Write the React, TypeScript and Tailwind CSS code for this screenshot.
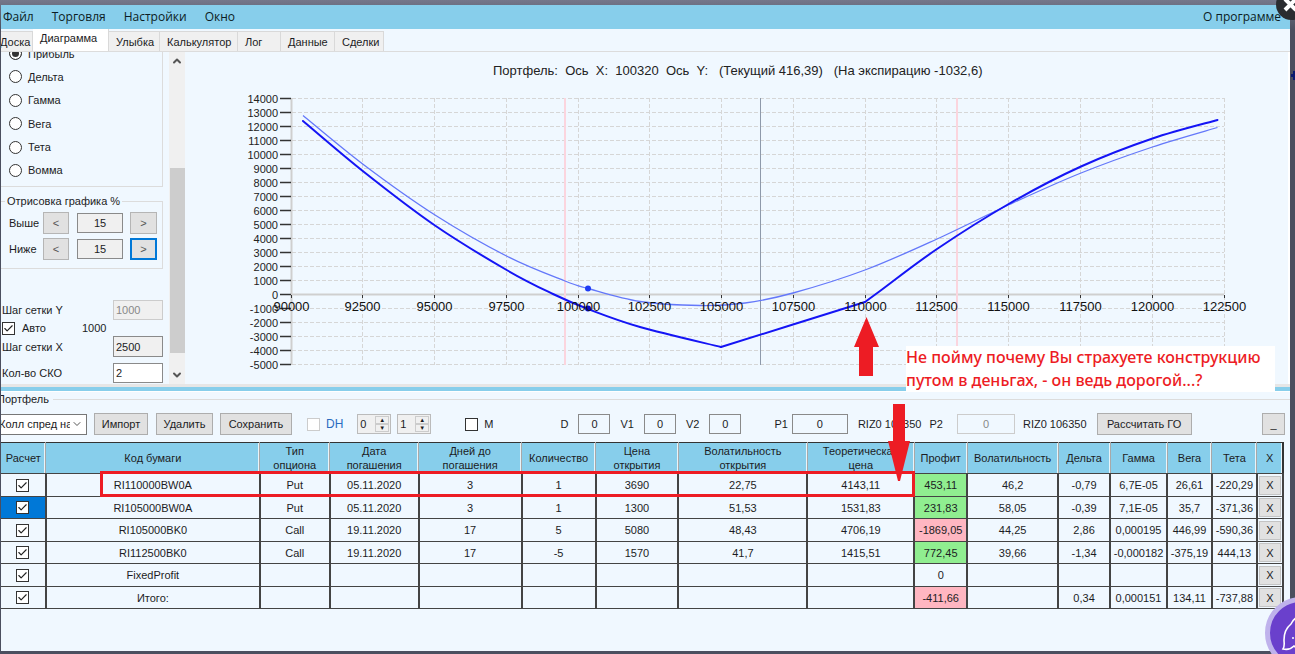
import React from 'react'
import { Check, ChevronDown, ChevronUp } from 'lucide-react'

type Point = [number, number]

type Row = {
  code: string
  cells: string[]
  profit?: 'up' | 'down'
  selected?: boolean
}

const menu = ['Файл', 'Торговля', 'Настройки', 'Окно']

const tabs = [
  { label: 'Доска', width: 'w-[40px]' },
  { label: 'Диаграмма', width: 'w-[76px]', active: true },
  { label: 'Улыбка', width: 'w-[51px]' },
  { label: 'Калькулятор', width: 'w-[78px]' },
  { label: 'Лог', width: 'w-[43px]' },
  { label: 'Данные', width: 'w-[54px]' },
  { label: 'Сделки', width: 'w-[49px]' }
]

const modes = ['Прибыль', 'Дельта', 'Гамма', 'Вега', 'Тета', 'Вомма']

const columns = [
  { title: 'Расчет', width: 45 },
  { title: 'Код бумаги', width: 214 },
  { title: 'Тип\nопциона', width: 70 },
  { title: 'Дата\nпогашения', width: 89 },
  { title: 'Дней до\nпогашения', width: 103 },
  { title: 'Количество', width: 74 },
  { title: 'Цена\nоткрытия', width: 83 },
  { title: 'Волатильность\nоткрытия', width: 129 },
  { title: 'Теоретическая\nцена', width: 107 },
  { title: 'Профит', width: 53 },
  { title: 'Волатильность', width: 91 },
  { title: 'Дельта', width: 52 },
  { title: 'Гамма', width: 57 },
  { title: 'Вега', width: 45 },
  { title: 'Тета', width: 45 },
  { title: 'X', width: 26 }
]

const rows: Row[] = [
  {
    code: 'RI110000BW0A',
    cells: ['Put', '05.11.2020', '3', '1', '3690', '22,75', '4143,11', '453,11', '46,2', '-0,79', '6,7E-05', '26,61', '-220,29'],
    profit: 'up'
  },
  {
    code: 'RI105000BW0A',
    cells: ['Put', '05.11.2020', '3', '1', '1300', '51,53', '1531,83', '231,83', '58,05', '-0,39', '7,1E-05', '35,7', '-371,36'],
    profit: 'up',
    selected: true
  },
  {
    code: 'RI105000BK0',
    cells: ['Call', '19.11.2020', '17', '5', '5080', '48,43', '4706,19', '-1869,05', '44,25', '2,86', '0,000195', '446,99', '-590,36'],
    profit: 'down'
  },
  {
    code: 'RI112500BK0',
    cells: ['Call', '19.11.2020', '17', '-5', '1570', '41,7', '1415,51', '772,45', '39,66', '-1,34', '-0,000182', '-375,19', '444,13'],
    profit: 'up'
  },
  { code: 'FixedProfit', cells: ['', '', '', '', '', '', '', '0', '', '', '', '', ''] },
  {
    code: 'Итого:',
    cells: ['', '', '', '', '', '', '', '-411,66', '', '0,34', '0,000151', '134,11', '-737,88'],
    profit: 'down'
  }
]

const current: Point[] = [
  [303, 115.5], [364, 165], [435, 215], [507.5, 256.5], [565, 281], [588, 288.5], [640, 301.5], [700, 305.5], [745, 303],
  [793, 293], [865, 270], [937, 239], [1009.5, 204.5], [1081, 173], [1152.5, 147], [1217.5, 127.5]
]

// the expiration line has corners at the strikes, so it is kept in three parts
const expiration: Point[][] = [
  [[303, 121], [364, 172], [435, 225.5], [507.5, 270.5], [553, 294], [588, 309], [640, 327], [721, 347]],
  [[721, 347], [865, 302]],
  [[865, 302], [880, 291], [937, 249], [1009.5, 203.5], [1081, 166.5], [1152.5, 138.5], [1217.5, 120]]
]

function smooth(points: Point[]) {
  let d = `M${points[0][0]} ${points[0][1]}`
  for (let i = 0; i < points.length - 1; i++) {
    const p0 = points[i - 1] ?? points[i]
    const p1 = points[i]
    const p2 = points[i + 1]
    const p3 = points[i + 2] ?? p2
    d += ` C${p1[0] + (p2[0] - p0[0]) / 6} ${p1[1] + (p2[1] - p0[1]) / 6}`
    d += ` ${p2[0] - (p3[0] - p1[0]) / 6} ${p2[1] - (p3[1] - p1[1]) / 6} ${p2[0]} ${p2[1]}`
  }
  return d
}

const px = (value: number) => Math.floor(291 + ((value - 90000) * 933) / 32500) + 0.5
const py = (value: number) => Math.round(294 - value * 0.014) + 0.5

function Chart() {
  const ys = Array.from({ length: 20 }, (_, i) => -5000 + i * 1000)
  const xs = Array.from({ length: 14 }, (_, i) => 90000 + i * 2500)

  return (
    <svg viewBox="185 52 1103 332" className="block w-full" role="img" aria-label="Портфель">
      <text x="493" y="75" fontSize="13" fill="#222" xmlSpace="preserve">
        Портфель:  Ось  X:  100320  Ось  Y:   (Текущий 416,39)   (На экспирацию -1032,6)
      </text>
      {/* Grid */}
      <g stroke="#d6d6d6" strokeDasharray="4 2">
        {ys.map(y => <line key={y} x1="292" x2="1224" y1={py(y)} y2={py(y)} />)}
        {xs.slice(1).map(x => <line key={x} x1={px(x)} x2={px(x)} y1="98" y2="365" />)}
      </g>
      <path d="M291.5 98V365M291 294.5H1224" stroke="#cfcfcf" strokeWidth="2" />
      <path d="M565 98V365M957 98V365" stroke="#fbd5de" strokeWidth="2" />
      <path d="M760.5 98V365" stroke="#8e99aa" />

      {/* Curves */}
      <path d={smooth(current)} fill="none" stroke="#6478fa" strokeWidth="1.3" />
      {expiration.map((part, i) => (
        <path key={i} d={smooth(part)} fill="none" stroke="#1414f5" strokeWidth="2" strokeLinejoin="round" strokeLinecap="round" />
      ))}
      <circle cx="588" cy="288.5" r="3" fill="#1e3cf5" />
      <circle cx="588" cy="308.5" r="3" fill="#0a0ac8" />

      {/* Axis labels */}
      {ys.map(y => (
        <g key={y}>
          <line x1="280" x2="291" y1={py(y)} y2={py(y)} stroke="#333" strokeWidth="1.5" />
          <text x="278" y={py(y) + 4} fontSize="11" textAnchor="end" fill="#222">{y}</text>
        </g>
      ))}
      {xs.map(x => (
        <g key={x}>
          <line x1={px(x)} x2={px(x)} y1="295" y2="298" stroke="#333" />
          <text x={px(x)} y="311" fontSize="13" textAnchor="middle" fill="#111">{x}</text>
        </g>
      ))}
    </svg>
  )
}

function Tick({ label, checked = false, pale = false }: { label: string; checked?: boolean; pale?: boolean }) {
  return (
    <span className="inline-grid size-[13px] place-items-center align-middle">
      <input
        type="checkbox"
        aria-label={label}
        defaultChecked={checked}
        className={`col-start-1 row-start-1 size-[13px] appearance-none border bg-white ${pale ? 'border-[#ccc]' : 'border-[#333]'}`}
      />
      {checked && <Check className="pointer-events-none col-start-1 row-start-1 size-[11px] text-[#222]" strokeWidth={2.5} />}
    </span>
  )
}

function Percent({ label, focused = false }: { label: string; focused?: boolean }) {
  return (
    <div className="flex h-[22px] items-center">
      <label htmlFor={label} className="w-[34px]">{label}</label>
      <button className="h-[22px] w-[26px] border border-[#b5b5b5] bg-[#e1e1e1] text-[#555]">&lt;</button>
      <input id={label} defaultValue="15" className="ml-2 h-[20px] w-[46px] border border-[#8a8a8a] bg-[#f0f0f0] text-center" />
      <button
        className={`ml-[7px] h-[22px] w-[27px] bg-[#e1e1e1] text-[#555] ${focused ? 'border-2 border-[#0078d7]' : 'border border-[#b5b5b5]'}`}
      >
        &gt;
      </button>
    </div>
  )
}

function Sidebar() {
  return (
    <div className="flex w-[184px] shrink-0 overflow-hidden">
      <div className="flex-1 pr-[6px]">
        <div className="-mt-[6px] flex h-[141px] flex-col justify-between border-r border-b border-[#dcdcdc] pb-2 pl-2">
          {modes.map((mode, i) => (
            <label key={mode} className="flex h-[15px] items-center gap-[6px]">
              <input
                type="radio"
                name="mode"
                defaultChecked={i === 0}
                className="size-[13px] appearance-none rounded-full border border-[#333] bg-white checked:border-[#333] checked:bg-[#333] checked:shadow-[inset_0_0_0_2px_white]"
              />
              {mode}
            </label>
          ))}
        </div>

        <fieldset className="mt-[7px] h-[75px] border border-l-0 border-[#dcdcdc] pl-2">
          <legend className="-ml-1 px-[2px] leading-[14px]">Отрисовка графика %</legend>
          <div className="flex flex-col gap-1 pt-1">
            <Percent label="Выше" />
            <Percent label="Ниже" focused />
          </div>
        </fieldset>

        <div className="mt-[31px] flex flex-col pl-[1px]">
          <div className="flex h-[20px] items-center justify-between">
            <label htmlFor="stepY">Шаг сетки Y</label>
            <input id="stepY" disabled defaultValue="1000" className="h-[20px] w-[50px] border border-[#ccc] bg-[#f0f0f0] pl-[2px] text-[#888]" />
          </div>
          <div className="flex h-[16px] items-center">
            <Tick label="Авто" checked />
            <span className="ml-[7px] w-[60px]">Авто</span>
            <span>1000</span>
          </div>
          <div className="flex h-[21px] items-center justify-between">
            <label htmlFor="stepX">Шаг сетки X</label>
            <input id="stepX" defaultValue="2500" className="h-[21px] w-[50px] border border-[#8a8a8a] bg-[#f0f0f0] pl-[2px]" />
          </div>
          <div className="mt-[6px] flex h-[20px] items-center justify-between">
            <label htmlFor="sko">Кол-во СКО</label>
            <input id="sko" defaultValue="2" className="h-[20px] w-[50px] border border-[#8a8a8a] bg-white pl-[2px]" />
          </div>
        </div>
      </div>

      {/* Scrollbar */}
      <div className="flex w-[16px] flex-col items-center justify-between bg-[#f0f0f0] py-[3px]">
        <ChevronUp className="size-3 text-[#555]" strokeWidth={4} />
        <div className="mt-[101px] w-[15px] flex-1 bg-[#cdcdcd]" />
        <ChevronDown className="mt-4 size-3 text-[#555]" strokeWidth={4} />
      </div>
    </div>
  )
}

function Spinner({ label, value }: { label: string; value: string }) {
  return (
    <span className="flex h-[20px] w-[34px] border border-[#bbb] bg-[#f0f0f0] p-px">
      <input aria-label={label} defaultValue={value} className="w-[16px] pl-px" />
      <span className="flex w-[14px] flex-col">
        <button aria-label={`${label} +`} className="flex h-2 items-center justify-center border border-[#ccc] text-[6px]">▲</button>
        <button aria-label={`${label} -`} className="flex h-2 items-center justify-center border border-[#ccc] text-[6px]">▼</button>
      </span>
    </span>
  )
}

function Field({ label, width, muted = false }: { label: string; width: string; muted?: boolean }) {
  return (
    <>
      <label htmlFor={label}>{label}</label>
      <input
        id={label}
        defaultValue="0"
        className={`h-[20px] border text-center ${width} ${muted ? 'border-[#ccc] text-[#888]' : 'border-[#8a8a8a]'}`}
      />
    </>
  )
}

function Toolbar() {
  const button = 'h-[22px] border border-[#adadad] bg-[#e1e1e1]'

  return (
    <div className="flex h-[22px] items-center pr-[5px] whitespace-nowrap">
      <div className="-ml-1 inline-grid w-[90px] items-center">
        <select aria-label="Стратегия" className="col-start-1 row-start-1 h-[21px] w-full appearance-none border border-[#777] bg-white pr-4 pl-px">
          <option>Колл спред на</option>
        </select>
        <ChevronDown className="pointer-events-none col-start-1 row-start-1 mr-1 size-3 justify-self-end text-[#555]" />
      </div>
      <button className={`ml-[7px] w-[54px] ${button}`}>Импорт</button>
      <button className={`ml-2 w-[57px] ${button}`}>Удалить</button>
      <button className={`ml-[7px] w-[72px] ${button}`}>Сохранить</button>
      <div className="ml-[15px] flex items-center gap-[6px] text-[12px] text-[#2a6cbf]">
        <Tick label="DH" pale />
        DH
      </div>
      <div className="ml-[14px] flex gap-[6px]">
        <Spinner label="Hedge" value="0" />
        <Spinner label="Step" value="1" />
      </div>
      <div className="ml-[34px] flex items-center gap-[6px]">
        <Tick label="M" />
        M
      </div>
      <div className="ml-[67px] flex items-center gap-[10px]">
        <Field label="D" width="w-[32px]" />
        <Field label="V1" width="w-[32px]" />
        <Field label="V2" width="w-[32px]" />
      </div>
      <div className="ml-[33px] flex items-center gap-[4px]">
        <Field label="P1" width="w-[56px]" />
      </div>
      <span className="ml-[10px]">RIZ0 106350</span>
      <div className="ml-2 flex items-center gap-[14px]">
        <Field label="P2" width="w-[58px]" muted />
      </div>
      <span className="ml-2">RIZ0 106350</span>
      <button className={`ml-[10px] w-[95px] ${button}`}>Рассчитать ГО</button>
      <button className={`ml-auto w-[23px] ${button}`}>_</button>
    </div>
  )
}

function Positions() {
  return (
    <table className="w-full table-fixed border-collapse border-y border-r-2 border-[#333] text-center">
      <colgroup>
        {columns.map((c, i) => <col key={i} style={{ width: `${(c.width / 1283) * 100}%` }} />)}
      </colgroup>
      <thead>
        <tr className="h-[31px] bg-[#87ceeb] leading-[14px]">
          {columns.map((c, i) => (
            <th key={i} className="border-r border-[#a8a8a8] p-0 font-normal whitespace-pre-line shadow-[inset_-1px_0_0_#e8f4fa]">
              {c.title}
            </th>
          ))}
        </tr>
      </thead>
      <tbody>
        {rows.map(row => (
          <tr key={row.code} className="odd:h-[23px] even:h-[22px]">
            <td className={`border-x-2 border-y border-l-0 border-[#444] p-0 leading-none ${row.selected ? 'bg-[#0078d7]' : ''}`}>
              <Tick label={row.code} checked />
            </td>
            <td className="border-x-2 border-y border-[#444] p-0">{row.code}</td>
            {row.cells.map((cell, i) => (
              <td
                key={i}
                className={`border-x-2 border-y border-[#444] p-0 ${i === 7 && row.profit === 'up' ? 'bg-[#90ee90]' : ''} ${i === 7 && row.profit === 'down' ? 'bg-[#ffb6c1]' : ''}`}
              >
                {cell}
              </td>
            ))}
            <td className="border-x-2 border-y border-[#444] p-px">
              <button className="block h-[19px] w-full border border-[#c4c4c4] bg-[#e1e1e1]">X</button>
            </td>
          </tr>
        ))}
      </tbody>
    </table>
  )
}

export default function App() {
  return (
    <div className="relative flex min-h-screen flex-col overflow-hidden bg-[linear-gradient(#75778a,#4b4f5f_30px)] pt-[5px] pr-[5px] pb-[3px] pl-px font-['Liberation_Sans',sans-serif] text-[11px] leading-[14px] text-[#1c1c24]">
      <div className="flex flex-1 flex-col overflow-hidden bg-[#f0f8ff]">
        {/* Menu */}
        <nav className="flex h-[24px] shrink-0 items-center gap-[18px] bg-[#87ceeb] pr-[9px] pl-[2px] font-['Open_Sans',sans-serif] text-[12px] text-[#0c1c24]">
          {menu.map(item => <button key={item}>{item}</button>)}
          <button className="ml-auto">О программе</button>
        </nav>

        {/* Tabs */}
        <div className="flex h-[23px] shrink-0 items-end border-b border-[#dcdcdc]">
          <div role="tablist" className="-ml-[8px] flex items-end">
            {tabs.map(tab => (
              <button
                key={tab.label}
                role="tab"
                aria-selected={!!tab.active}
                className={`border-r border-[#d9d9d9] pl-[7px] text-left ${tab.width} ${tab.active ? 'h-[22px] bg-white pb-1' : 'h-[20px] border-t bg-[#f0f0f0]'}`}
              >
                {tab.label}
              </button>
            ))}
          </div>
        </div>

        <div className="flex h-[332px] shrink-0 border-r-2 border-white">
          <Sidebar />
          <div className="min-w-0 flex-1">
            <Chart />
          </div>
        </div>

        <div className="h-[8px] shrink-0 border-t-[3px] border-b border-t-[#e6e6e6] border-b-white bg-[#87ceeb]" />

        {/* Portfolio */}
        <div>
          <div className="flex h-[14px] items-center gap-1">
            <span className="-ml-1">Портфель</span>
            <span className="h-px flex-1 bg-[#dcdcdc]" />
          </div>
          <div className="mt-[7px]">
            <Toolbar />
          </div>
          <div className="mt-[7px] pr-[6px]">
            <Positions />
          </div>
        </div>
      </div>

      {/* Annotations */}
      <div className="absolute top-[471px] left-[100px] h-[26px] w-[815px] border-[3px] border-[#ed1c24]" />
      <p className="absolute top-[346px] left-[906px] h-[46px] w-[369px] bg-white font-['Noto_Sans',sans-serif] text-[16px] leading-[23px] font-medium whitespace-nowrap text-[#ed1c24]">
        Не пойму почему Вы страхуете конструкцию
        <br />
        путом в деньгах, - он ведь дорогой...?
      </p>
      <svg className="absolute top-[317px] left-[854px] h-[59px] w-[26px]" viewBox="0 0 26 59" fill="#ed1c24">
        <path d="M12.5 0L25 30H19V59H5V30H0Z" />
      </svg>
      <svg className="absolute top-[404px] left-[887px] h-[77px] w-[24px]" viewBox="0 0 24 77" fill="#ed1c24">
        <path d="M6 0H18V37H23L13 77H11L1 37H6Z" />
      </svg>

      <svg className="absolute top-[71px] right-0 h-[9px] w-[4px]" viewBox="0 0 4 9" fill="#0a1a6e">
        <path d="M0 3H2V0H4V9H2V6H0Z" />
      </svg>
      <button aria-label="Закрыть" className="absolute -top-[11px] -right-[12px] size-[31px] rounded-full bg-[#2a2c30]">
        <svg viewBox="0 0 31 31" stroke="#fff" strokeWidth="4">
          <path d="M9 10L20 21M20 10L9 21" />
        </svg>
      </button>
      <button aria-label="Чат" className="absolute top-[597px] -right-[42px] size-[72px] rounded-full border-[5px] border-[#bfb2ec] bg-[#6a40cc]">
        <svg viewBox="0 0 62 62" fill="none" stroke="#fff" strokeWidth="1.6">
          <path d="M13 47C15 44 14 41 14 38C14 31 16 26 21 22C23 18 27 14 32 14C42 14 49 22 49 31S42 47 32 47C29 47 26 46 24 44C21 47 17 48 13 47Z" />
          <circle cx="23" cy="36" r="1" fill="#fff" stroke="none" />
          <circle cx="31" cy="36" r="1" fill="#fff" stroke="none" />
        </svg>
      </button>
    </div>
  )
}
